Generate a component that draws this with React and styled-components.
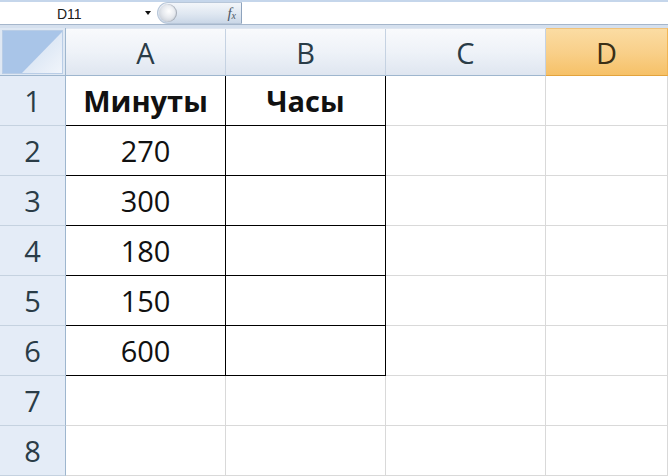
import styled, { createGlobalStyle } from "styled-components";

const GlobalStyle = createGlobalStyle`
  html, body {
    margin: 0;
    padding: 0;
    background: #ffffff;
    overflow: hidden;
  }
  body {
    font-family: "Open Sans", "Noto Sans", sans-serif;
  }
`;

const columns = ["A", "B", "C", "D"];
const selectedColumn = "D";

const rows = [
  ["Минуты", "Часы"],
  ["270", ""],
  ["300", ""],
  ["180", ""],
  ["150", ""],
  ["600", ""],
  null,
  null,
];

export default function App() {
  return (
    <>
      <GlobalStyle />
      <Page>
        <FormulaBar>
          <NameBox>
            <span>D11</span>
            <Arrow />
          </NameBox>
          <FxCapsule>
            <Knob />
            <FxLabel>
              f<sub>x</sub>
            </FxLabel>
          </FxCapsule>
          <FormulaInput />
        </FormulaBar>
        <Gap />
        <Sheet>
          <Corner>
            <CornerBox />
          </Corner>
          {columns.map((c) => (
            <ColHeader key={c} $selected={c === selectedColumn}>
              {c}
            </ColHeader>
          ))}
          {rows.map((row, i) => (
            <Row key={i} index={i} data={row} />
          ))}
        </Sheet>
      </Page>
    </>
  );
}

function Row({ index, data }) {
  const boxed = data !== null;
  return (
    <>
      <RowHeader>{index + 1}</RowHeader>
      {columns.map((c, ci) => (
        <Cell
          key={c}
          $boxed={boxed && ci < 2}
          $bold={index === 0}
        >
          {boxed && ci < 2 ? data[ci] : ""}
        </Cell>
      ))}
    </>
  );
}

const Page = styled.div`
  width: 668px;
  height: 476px;
  display: flex;
  flex-direction: column;
  overflow: hidden;
`;

const FormulaBar = styled.div`
  height: 22px;
  display: flex;
  align-items: stretch;
  border-top: 2px solid #c5d6eb;
  border-bottom: 1px solid #a5b6cb;
  background: #ffffff;
`;

const NameBox = styled.div`
  width: 157px;
  display: flex;
  align-items: center;
  font-family: "Liberation Sans", Arial, sans-serif;
  font-size: 14px;
  color: #1a1a1a;
  span {
    margin-left: 57px;
    flex: 1;
    padding-top: 1px;
  }
`;

const Arrow = styled.div`
  width: 0;
  height: 0;
  margin-right: 6px;
  border-left: 3.5px solid transparent;
  border-right: 3.5px solid transparent;
  border-top: 4px solid #111;
`;

const FxCapsule = styled.div`
  width: 85px;
  display: flex;
  align-items: center;
  justify-content: space-between;
  border-radius: 11px 0 0 11px;
  border: 1px solid #b8c7d9;
  border-right: 1px solid #8ea3bd;
  box-sizing: border-box;
  background: linear-gradient(to bottom, #f3f6fa 0%, #dfe7f1 55%, #cad7e7 100%);
`;

const Knob = styled.div`
  width: 18px;
  height: 18px;
  margin-left: 1px;
  border-radius: 50%;
  background: radial-gradient(circle at 55% 40%, #ffffff 0%, #e6e9ee 45%, #b9c0ca 100%);
  box-shadow: inset -1px 0 1px rgba(120, 130, 145, 0.6);
`;

const FxLabel = styled.span`
  margin-right: 5px;
  font-family: "Liberation Serif", "Times New Roman", serif;
  font-style: italic;
  font-size: 15px;
  color: #4d5865;
  sub {
    font-size: 10px;
    vertical-align: -1px;
  }
`;

const FormulaInput = styled.div`
  flex: 1;
  background: #ffffff;
`;

const Gap = styled.div`
  height: 3px;
  background: #d5e0ee;
`;

const Sheet = styled.div`
  flex: 1;
  display: grid;
  grid-template-columns: 66px 160px 160px 160px 1fr;
  grid-template-rows: 48px repeat(8, 50px);
`;

const Corner = styled.div`
  box-sizing: border-box;
  border-right: 1px solid #9eb6ce;
  border-bottom: 1px solid #9eb6ce;
  background: #dfe8f3;
  padding: 2px 2px 1px 2px;
  display: flex;
`;

const CornerBox = styled.div`
  flex: 1;
  position: relative;
  border: 1px solid #b9cde6;
  background: #a9c5e8;
  &::after {
    content: "";
    position: absolute;
    right: 0;
    bottom: 0;
    width: 40px;
    height: 41px;
    clip-path: polygon(100% 0, 100% 100%, 0 100%);
    background: linear-gradient(to top left, #f1f5fb 0%, #dbe6f4 60%, #cddcf0 100%);
  }
`;

const ColHeader = styled.div`
  box-sizing: border-box;
  display: flex;
  align-items: center;
  justify-content: center;
  font-size: 29px;
  color: ${({ $selected }) => ($selected ? "#3a2f16" : "#2a3c47")};
  border-right: 1px solid ${({ $selected }) => ($selected ? "#f2b553" : "#c5d2e2")};
  border-bottom: 1px solid ${({ $selected }) => ($selected ? "#e3a33d" : "#9eb6ce")};
  border-top: 1px solid ${({ $selected }) => ($selected ? "#f0c27a" : "transparent")};
  background: ${({ $selected }) =>
    $selected
      ? "linear-gradient(to bottom, #fbdca3 0%, #f9d08a 50%, #f6c168 100%)"
      : "linear-gradient(to bottom, #f9fafc 0%, #eef2f8 50%, #dfe6f0 100%)"};
`;

const RowHeader = styled.div`
  box-sizing: border-box;
  display: flex;
  align-items: center;
  justify-content: center;
  font-size: 29px;
  color: #2a3c47;
  background: #e4ecf7;
  border-right: 1px solid #9eb6ce;
  border-bottom: 1px solid #c5d2e0;
`;

const Cell = styled.div`
  box-sizing: border-box;
  display: flex;
  align-items: center;
  justify-content: center;
  font-size: 29px;
  font-weight: ${({ $bold }) => ($bold ? 700 : 400)};
  color: #111111;
  border-right: 1px solid ${({ $boxed }) => ($boxed ? "#000000" : "#d9d9d9")};
  border-bottom: 1px solid ${({ $boxed }) => ($boxed ? "#000000" : "#d9d9d9")};
`;
